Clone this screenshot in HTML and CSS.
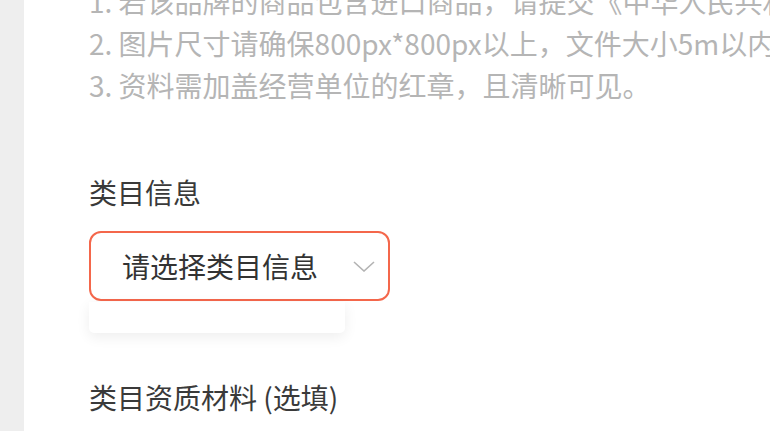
FILE: index.html
```html
<!DOCTYPE html>
<html lang="zh-CN">
<head>
    <meta charset="UTF-8">
    <meta name="viewport" content="width=device-width, initial-scale=1.0">
    <title>类目信息</title>
    <link rel="stylesheet" href="styles.css">
</head>
<body>

<div class="page">
    <div class="tips">
        <p>1. 若该品牌的商品包含进口商品，请提交《中华人民共和国海关进口货物报关单》</p>
        <p>2. 图片尺寸请确保800px*800px以上，文件大小5m以内，支持jpg、png格式</p>
        <p>3. 资料需加盖经营单位的红章，且清晰可见。</p>
    </div>

    <div class="field">
        <div class="field-label">类目信息</div>
        <div class="select-wrap">
            <div class="select">
                <span class="select-text">请选择类目信息</span>
                <svg class="arrow" width="22" height="11" viewBox="0 0 22 11">
                    <polyline points="1,1 11,10 21,1" fill="none" stroke="#b3b3b3" stroke-width="1.6"/>
                </svg>
            </div>
            <div class="dropdown"></div>
        </div>
    </div>

    <div class="field field-next">
        <div class="field-label">类目资质材料 (选填)</div>
    </div>
</div>

</body>
</html>
```

FILE: styles.css
```css
/* 基础 */
body {
    margin: 0;
    background-color: #eeeeee;
    font-family: "Noto Sans CJK SC", "Noto Sans", sans-serif;
    overflow: hidden;
}
.page {
    margin-left: 24px;
    min-height: 460px;
    background-color: #fff;
    padding-left: 65px;
    margin-top: -20px;
}

/* 提示 */
.tips p {
    margin: 0;
    font-size: 28px;
    line-height: 42px;
    color: #b5b5b5;
    white-space: nowrap;
}

/* 表单 */
.field {
    padding-top: 66px;
}
.field-next {
    padding-top: 76px;
}
.field-label {
    font-size: 28px;
    line-height: 40px;
    color: #3a3a3a;
}
.select-wrap {
    position: relative;
    margin-top: 19px;
    width: 301px;
}
.select {
    box-sizing: border-box;
    height: 70px;
    border: 2px solid #f4674b;
    border-radius: 12px;
    padding: 0 13px 0 31px;
    display: flex;
    align-items: center;
    justify-content: space-between;
}
.select-text {
    font-size: 28px;
    color: #333;
}
.arrow {
    display: block;
}
.dropdown {
    position: absolute;
    left: 0;
    top: 71px;
    width: 256px;
    height: 31px;
    background-color: #fff;
    border-radius: 0 0 5px 5px;
    box-shadow: 0 4px 14px rgba(0, 0, 0, 0.07);
}
```
